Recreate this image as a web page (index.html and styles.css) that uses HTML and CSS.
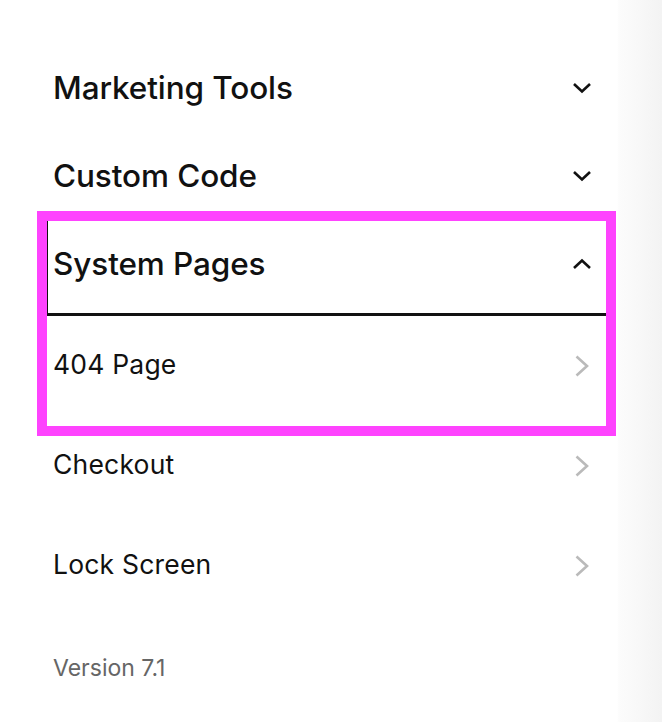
FILE: index.html
```html
<!DOCTYPE html>
<html lang="en">
<head>
    <meta charset="UTF-8">
    <title>Website Settings</title>
    <link rel="stylesheet" href="styles.css">
</head>
<body>
<div class="panel">
    <div class="group-head">
        <span class="head-label">Marketing Tools</span>
        <svg class="chev-down" width="20" height="12" viewBox="0 0 20 12"><polyline points="2,2 10,9.5 18,2" fill="none" stroke="#111" stroke-width="2.6"/></svg>
    </div>
    <div class="group-head">
        <span class="head-label">Custom Code</span>
        <svg class="chev-down" width="20" height="12" viewBox="0 0 20 12"><polyline points="2,2 10,9.5 18,2" fill="none" stroke="#111" stroke-width="2.6"/></svg>
    </div>
    <div class="focus">
        <div class="group-head open">
            <span class="head-label">System Pages</span>
            <svg class="chev-up" width="20" height="12" viewBox="0 0 20 12"><polyline points="2,10 10,2.5 18,10" fill="none" stroke="#111" stroke-width="2.6"/></svg>
        </div>
        <a class="item" href="javascript:;">
            <span>404 Page</span>
            <svg class="chev-right" width="16" height="22" viewBox="0 0 16 22"><polyline points="2.5,1.5 13,11 2.5,20.5" fill="none" stroke="#bababa" stroke-width="2.6"/></svg>
        </a>
    </div>
    <a class="item" href="javascript:;">
        <span>Checkout</span>
        <svg class="chev-right" width="16" height="22" viewBox="0 0 16 22"><polyline points="2.5,1.5 13,11 2.5,20.5" fill="none" stroke="#bababa" stroke-width="2.6"/></svg>
    </a>
    <a class="item" href="javascript:;">
        <span>Lock Screen</span>
        <svg class="chev-right" width="16" height="22" viewBox="0 0 16 22"><polyline points="2.5,1.5 13,11 2.5,20.5" fill="none" stroke="#bababa" stroke-width="2.6"/></svg>
    </a>
    <div class="version">Version 7.1</div>
</div>
</body>
</html>
```

FILE: styles.css
```css
html, body {
    margin: 0;
    padding: 0;
}
body {
    height: 722px;
    font-family: Inter, "Liberation Sans", sans-serif;
    color: #111;
    background: linear-gradient(to right, #fff 617px, #fcfcfc 619px, #f3f3f3 662px);
}
.panel {
    box-sizing: border-box;
    width: 617px;
    height: 722px;
    padding: 44px 26px 0 53px;
    background: #fff;
}
.group-head {
    display: flex;
    align-items: center;
    justify-content: space-between;
    height: 88px;
}
.head-label {
    font-size: 31.5px;
    font-weight: 500;
    letter-spacing: -0.1px;
    margin-bottom: 2px;
}
.chev-down, .chev-up {
    margin-right: -1px;
}
.group-head.open {
    box-sizing: content-box;
    height: 88px;
    padding: 0 15px 5px 5px;
    margin: 0 -15px 0 -6px;
    border-left: 1px solid #111;
    border-bottom: 3px solid #111;
}
.focus {
    position: relative;
}
.focus::after {
    content: "";
    position: absolute;
    top: -9px;
    left: -16px;
    right: -25px;
    bottom: -20px;
    border: 10px solid #fe43fe;
    pointer-events: none;
}
.item {
    display: flex;
    align-items: center;
    justify-content: space-between;
    height: 100px;
    font-size: 26.5px;
    letter-spacing: 0.2px;
    color: #111;
    text-decoration: none;
}
.item span {
    margin-bottom: 4px;
}
.chev-right {
    margin-right: 1px;
}
.version {
    margin-top: 39px;
    font-size: 23px;
    line-height: 26px;
    color: #666;
}
```
